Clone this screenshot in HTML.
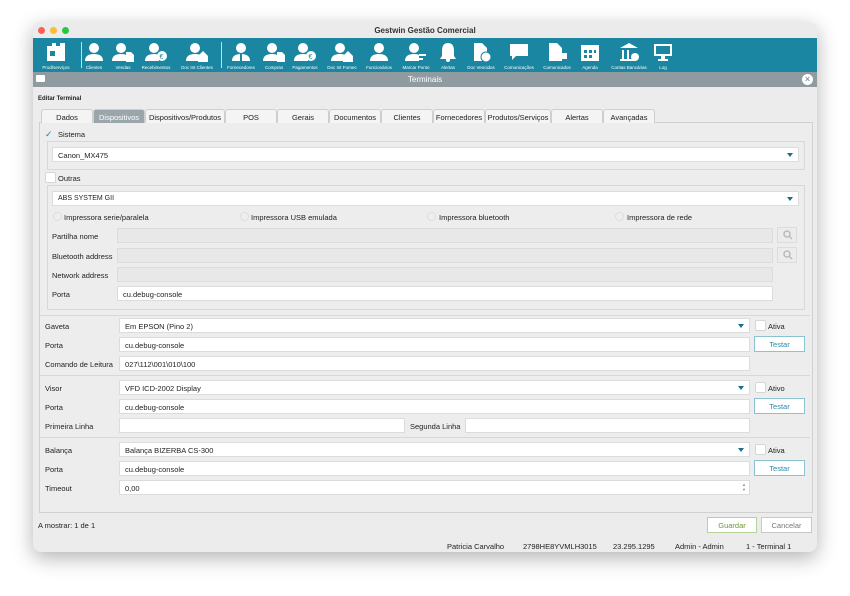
<!DOCTYPE html>
<html><head><meta charset="utf-8"><style>
*{box-sizing:border-box;margin:0;padding:0}
body{width:850px;height:596px;background:#fff;font-family:"Liberation Sans",sans-serif;font-size:7.5px;color:#222;position:relative;overflow:hidden}
.a{position:absolute}
#win{left:33px;top:22px;width:784px;height:530px;background:#ececec;border-radius:8px;box-shadow:0 6px 20px rgba(0,0,0,.3);overflow:hidden}
.f{position:absolute;background:#fff;border:1px solid #dcdcdc;height:15px;padding:3px 0 0 5px;white-space:nowrap}
.d{background:#e8e8e8;border-color:#dcdcdc}
.l{position:absolute;white-space:nowrap}
.arr{position:absolute;right:5px;top:5px;width:0;height:0;border-left:3px solid transparent;border-right:3px solid transparent;border-top:4px solid #1d6d8c}
.cb{position:absolute;width:11px;height:11px;background:#fff;border:1px solid #d6d6d6;border-radius:2px}
.rd{position:absolute;width:9px;height:9px;border-radius:50%;border:1px solid #ddd;background:#eee}
.btn{position:absolute;height:16px;border:1.5px solid #8cc3d3;background:#fff;color:#2a8aa8;text-align:center;padding-top:3px;width:51px}
.tab{position:absolute;top:109px;height:14px;border:1px solid #cfcfcf;border-bottom:none;background:#f4f4f4;text-align:center;padding-top:3px;border-radius:3px 3px 0 0}
.sep{position:absolute;left:40px;width:770px;height:1px;background:#d8d8d8}
.ti{position:absolute;top:42px;width:40px;text-align:center;color:#fff;font-size:4.5px}
.ti svg{display:block;margin:0 auto 3px}
.mg{position:absolute;width:20px;height:16px;border:1px solid #dcdcdc;background:#ececec}
</style></head><body>
<div id="win" class="a"></div>
<div class="a" style="left:33px;top:22px;width:784px;height:16px;background:#ebebeb;border-radius:8px 8px 0 0"></div>
<div class="a" style="left:38px;top:27px;width:7px;height:7px;border-radius:50%;background:#fe5f57"></div>
<div class="a" style="left:50px;top:27px;width:7px;height:7px;border-radius:50%;background:#febc2e"></div>
<div class="a" style="left:62px;top:27px;width:7px;height:7px;border-radius:50%;background:#28c840"></div>
<div class="l" style="left:0;width:850px;text-align:center;top:26px;font-weight:bold;font-size:8px;color:#333">Gestwin Gestão Comercial</div>
<div class="a" style="left:33px;top:38px;width:784px;height:34px;background:#1a86a1"></div>
<div class="a" style="left:81px;top:42px;width:1px;height:26px;background:#bfe0e8"></div>
<div class="a" style="left:221px;top:42px;width:1px;height:26px;background:#bfe0e8"></div>
<div class="ti" style="left:36px"><svg width="22" height="20"><path d="M2 4h5v-3h4v3h4v-3h5v18h-18z" fill="#fff"/><rect x="5" y="9" width="5" height="5" fill="#1a86a1"/></svg>Prod/serviços</div>
<div class="ti" style="left:74px"><svg width="22" height="20"><circle cx="11" cy="6" r="5" fill="#fff"/><path d="M2 19q0-7 9-7t9 7z" fill="#fff"/></svg>Clientes</div>
<div class="ti" style="left:103px"><svg width="22" height="20"><circle cx="9" cy="6" r="5" fill="#fff"/><path d="M0 19q0-7 9-7 4 0 5 1v6z" fill="#fff"/><path d="M14 10h5l3 3v7h-8z" fill="#fff"/></svg>Vendas</div>
<div class="ti" style="left:136px"><svg width="22" height="20"><circle cx="9" cy="6" r="5" fill="#fff"/><path d="M0 19q0-7 9-7 4 0 5 1v6z" fill="#fff"/><circle cx="17" cy="14" r="5" fill="#fff"/><text x="14.5" y="17" font-size="7" fill="#1a86a1">€</text></svg>Recebimentos</div>
<div class="ti" style="left:177px"><svg width="22" height="20"><circle cx="9" cy="6" r="5" fill="#fff"/><path d="M0 19q0-7 9-7 4 0 5 1v6z" fill="#fff"/><path d="M12 14l5-5 5 5v6h-10z" fill="#fff"/></svg>Doc Int Clientes</div>
<div class="ti" style="left:221px"><svg width="22" height="20"><circle cx="11" cy="6" r="5" fill="#fff"/><path d="M2 19q0-7 9-7t9 7z" fill="#fff"/><rect x="10" y="12" width="2" height="7" fill="#1a86a1"/></svg>Fornecedores</div>
<div class="ti" style="left:254px"><svg width="22" height="20"><circle cx="9" cy="6" r="5" fill="#fff"/><path d="M0 19q0-7 9-7 4 0 5 1v6z" fill="#fff"/><path d="M14 10h5l3 3v7h-8z" fill="#fff"/></svg>Compras</div>
<div class="ti" style="left:285px"><svg width="22" height="20"><circle cx="9" cy="6" r="5" fill="#fff"/><path d="M0 19q0-7 9-7 4 0 5 1v6z" fill="#fff"/><circle cx="17" cy="14" r="5" fill="#fff"/><text x="14.5" y="17" font-size="7" fill="#1a86a1">€</text></svg>Pagamentos</div>
<div class="ti" style="left:322px"><svg width="22" height="20"><circle cx="9" cy="6" r="5" fill="#fff"/><path d="M0 19q0-7 9-7 4 0 5 1v6z" fill="#fff"/><path d="M12 14l5-5 5 5v6h-10z" fill="#fff"/></svg>Doc Int Fornec</div>
<div class="ti" style="left:359px"><svg width="22" height="20"><circle cx="11" cy="6" r="5" fill="#fff"/><path d="M2 19q0-7 9-7t9 7z" fill="#fff"/></svg>Funcionários</div>
<div class="ti" style="left:396px"><svg width="22" height="20"><circle cx="9" cy="6" r="5" fill="#fff"/><path d="M0 19q0-7 9-7 4 0 5 1v6z" fill="#fff"/><path d="M14 13h7M18 17h-5" stroke="#fff" stroke-width="2"/></svg>Marcar Ponto</div>
<div class="ti" style="left:428px"><svg width="22" height="20"><path d="M11 1q6 0 6 8v5l2 3h-16l2-3v-5q0-8 6-8z" fill="#fff"/><circle cx="11" cy="18" r="2" fill="#fff"/></svg>Alertas</div>
<div class="ti" style="left:461px"><svg width="22" height="20"><path d="M4 1h8l5 5v13h-13z" fill="#fff"/><circle cx="16" cy="15" r="5" fill="#fff" stroke="#1a86a1"/></svg>Doc Vencidos</div>
<div class="ti" style="left:499px"><svg width="22" height="20"><path d="M2 2h18v12h-12l-4 4v-4h-2z" fill="#fff"/></svg>Comunicações</div>
<div class="ti" style="left:537px"><svg width="22" height="20"><path d="M3 1h8l5 5v13h-13z" fill="#fff"/><path d="M12 11h9v6h-6l-2 2z" fill="#fff"/></svg>Comunicados</div>
<div class="ti" style="left:570px"><svg width="22" height="20"><rect x="2" y="3" width="18" height="16" fill="#fff"/><g fill="#1a86a1"><rect x="5" y="8" width="3" height="3"/><rect x="10" y="8" width="3" height="3"/><rect x="15" y="8" width="2" height="3"/><rect x="5" y="13" width="3" height="3"/><rect x="10" y="13" width="3" height="3"/></g></svg>Agenda</div>
<div class="ti" style="left:609px"><svg width="22" height="20"><path d="M11 1l9 5h-18z" fill="#fff"/><rect x="4" y="8" width="2" height="9" fill="#fff"/><rect x="9" y="8" width="2" height="9" fill="#fff"/><rect x="2" y="17" width="14" height="2" fill="#fff"/><circle cx="17" cy="15" r="4" fill="#fff"/></svg>Contas Bancárias</div>
<div class="ti" style="left:643px"><svg width="22" height="20"><rect x="2" y="2" width="18" height="12" fill="#fff"/><rect x="4" y="4" width="14" height="8" fill="#1a86a1"/><rect x="9" y="14" width="4" height="3" fill="#fff"/><rect x="6" y="17" width="10" height="2" fill="#fff"/></svg>Log</div>
<div class="a" style="left:33px;top:72px;width:784px;height:15px;background:#8f9ba1"></div>
<div class="a" style="left:36px;top:75px;width:9px;height:7px;background:#fff;border-radius:1px"></div>
<div class="l" style="left:0;width:850px;text-align:center;top:75px;color:#fff;font-size:8px">Terminais</div>
<div class="a" style="left:802px;top:74px;width:11px;height:11px;border-radius:50%;background:#fff;color:#8f9ba1;font-size:9px;text-align:center;line-height:11px;font-weight:bold">×</div>
<div class="l" style="left:38px;top:96px;font-weight:bold;font-size:6px">Editar Terminal</div>
<div class="a" style="left:39px;top:122px;width:774px;height:391px;border:1px solid #d0d0d0;background:#ededed"></div>
<div class="tab" style="left:41px;width:52px">Dados</div>
<div class="tab" style="left:93px;width:52px;background:#9aa6ac;color:#fff">Dispositivos</div>
<div class="tab" style="left:145px;width:80px">Dispositivos/Produtos</div>
<div class="tab" style="left:225px;width:52px">POS</div>
<div class="tab" style="left:277px;width:52px">Gerais</div>
<div class="tab" style="left:329px;width:52px">Documentos</div>
<div class="tab" style="left:381px;width:52px">Clientes</div>
<div class="tab" style="left:433px;width:52px">Fornecedores</div>
<div class="tab" style="left:485px;width:66px">Produtos/Serviços</div>
<div class="tab" style="left:551px;width:52px">Alertas</div>
<div class="tab" style="left:603px;width:52px">Avançadas</div>
<div class="l" style="left:45px;top:129px;color:#2a7fa5;font-size:9px">✓</div>
<div class="l" style="left:58px;top:130px">Sistema</div>
<div class="a" style="left:47px;top:141px;width:758px;height:29px;border:1px solid #d8d8d8"></div>
<div class="f" style="left:52px;top:147px;width:747px">Canon_MX475<div class="arr"></div></div>
<div class="cb" style="left:45px;top:172px"></div>
<div class="l" style="left:58px;top:174px">Outras</div>
<div class="a" style="left:47px;top:185px;width:758px;height:125px;border:1px solid #d8d8d8"></div>
<div class="f" style="left:52px;top:191px;width:747px;font-size:7px">ABS SYSTEM GII<div class="arr"></div></div>
<div class="rd" style="left:53px;top:212px"></div><div class="l" style="left:64px;top:213px">Impressora serie/paralela</div>
<div class="rd" style="left:240px;top:212px"></div><div class="l" style="left:251px;top:213px">Impressora USB emulada</div>
<div class="rd" style="left:427px;top:212px"></div><div class="l" style="left:439px;top:213px">Impressora bluetooth</div>
<div class="rd" style="left:615px;top:212px"></div><div class="l" style="left:627px;top:213px">Impressora de rede</div>
<div class="l" style="left:52px;top:232px">Partilha nome</div><div class="f d" style="left:117px;top:228px;width:656px"></div><div class="mg" style="left:777px;top:227px"><svg width="18" height="14"><circle cx="9" cy="6" r="3" fill="none" stroke="#bbb" stroke-width="1.5"/><path d="M11 8l3 3" stroke="#bbb" stroke-width="1.5"/></svg></div>
<div class="l" style="left:52px;top:252px">Bluetooth address</div><div class="f d" style="left:117px;top:248px;width:656px"></div><div class="mg" style="left:777px;top:247px"><svg width="18" height="14"><circle cx="9" cy="6" r="3" fill="none" stroke="#bbb" stroke-width="1.5"/><path d="M11 8l3 3" stroke="#bbb" stroke-width="1.5"/></svg></div>
<div class="l" style="left:52px;top:271px">Network address</div><div class="f d" style="left:117px;top:267px;width:656px"></div>
<div class="l" style="left:52px;top:290px">Porta</div><div class="f" style="left:117px;top:286px;width:656px">cu.debug-console</div>
<div class="sep" style="top:315px"></div>
<div class="l" style="left:45px;top:322px">Gaveta</div><div class="f" style="left:119px;top:318px;width:631px">Em EPSON (Pino 2)<div class="arr"></div></div>
<div class="cb" style="left:755px;top:320px"></div><div class="l" style="left:768px;top:322px">Ativa</div>
<div class="l" style="left:45px;top:341px">Porta</div><div class="f" style="left:119px;top:337px;width:631px">cu.debug-console</div><div class="btn" style="left:754px;top:336px">Testar</div>
<div class="l" style="left:45px;top:360px">Comando de Leitura</div><div class="f" style="left:119px;top:356px;width:631px">027\112\001\010\100</div>
<div class="sep" style="top:375px"></div>
<div class="l" style="left:45px;top:384px">Visor</div><div class="f" style="left:119px;top:380px;width:631px">VFD ICD-2002 Display<div class="arr"></div></div>
<div class="cb" style="left:755px;top:382px"></div><div class="l" style="left:768px;top:384px">Ativo</div>
<div class="l" style="left:45px;top:403px">Porta</div><div class="f" style="left:119px;top:399px;width:631px">cu.debug-console</div><div class="btn" style="left:754px;top:398px">Testar</div>
<div class="l" style="left:45px;top:422px">Primeira Linha</div><div class="f" style="left:119px;top:418px;width:286px"></div>
<div class="l" style="left:410px;top:422px">Segunda Linha</div><div class="f" style="left:465px;top:418px;width:285px"></div>
<div class="sep" style="top:437px"></div>
<div class="l" style="left:45px;top:446px">Balança</div><div class="f" style="left:119px;top:442px;width:631px">Balança BIZERBA CS-300<div class="arr"></div></div>
<div class="cb" style="left:755px;top:444px"></div><div class="l" style="left:768px;top:446px">Ativa</div>
<div class="l" style="left:45px;top:465px">Porta</div><div class="f" style="left:119px;top:461px;width:631px">cu.debug-console</div><div class="btn" style="left:754px;top:460px">Testar</div>
<div class="l" style="left:45px;top:484px">Timeout</div><div class="f" style="left:119px;top:480px;width:631px">0,00<div class="l" style="right:3px;top:1px;font-size:4px;color:#888">▲<br>▼</div></div>
<div class="l" style="left:38px;top:521px">A mostrar: 1 de 1</div>
<div class="btn" style="left:707px;top:517px;width:50px;border-color:#b6d49a;color:#6a9a2a">Guardar</div>
<div class="btn" style="left:761px;top:517px;width:51px;border-color:#c8c8c8;color:#777">Cancelar</div>
<div class="l" style="left:447px;top:542px">Patricia Carvalho</div>
<div class="l" style="left:523px;top:542px">2798HE8YVMLH3015</div>
<div class="l" style="left:613px;top:542px">23.295.1295</div>
<div class="l" style="left:675px;top:542px">Admin - Admin</div>
<div class="l" style="left:746px;top:542px">1 - Terminal 1</div>
</body></html>
